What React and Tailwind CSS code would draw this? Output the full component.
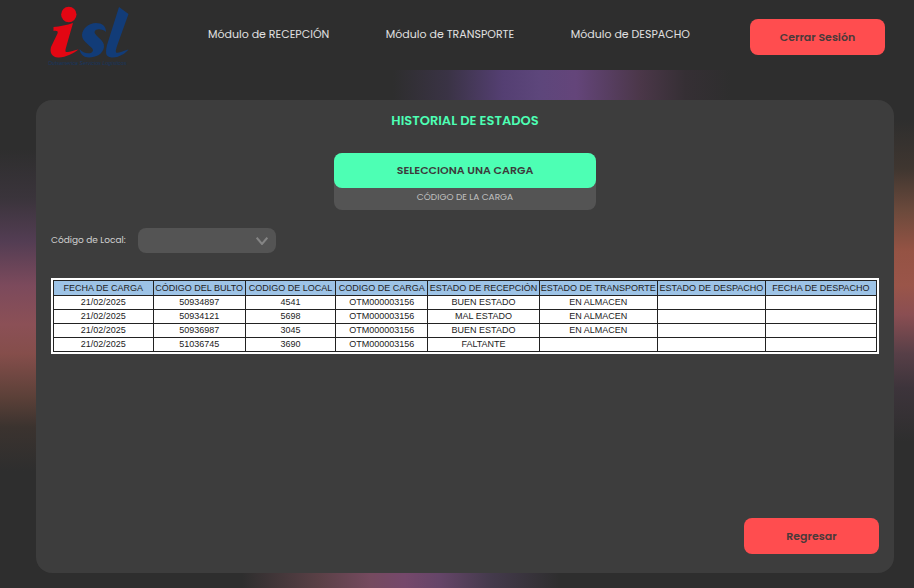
const columns = [
  { title: "FECHA DE CARGA", width: "w-[12.1%]" },
  { title: "CÓDIGO DEL BULTO", width: "w-[11.2%]" },
  { title: "CODIGO DE LOCAL", width: "w-[11%]" },
  { title: "CODIGO DE CARGA", width: "w-[11.2%]" },
  { title: "ESTADO DE RECEPCIÓN", width: "w-[13.5%]" },
  { title: "ESTADO DE TRANSPORTE", width: "w-[14.4%]" },
  { title: "ESTADO DE DESPACHO", width: "w-[13.1%]" },
  { title: "FECHA DE DESPACHO", width: "w-[13.5%]" },
];

const rows = [
  ["21/02/2025", "50934897", "4541", "OTM000003156", "BUEN ESTADO", "EN ALMACEN", "", ""],
  ["21/02/2025", "50934121", "5698", "OTM000003156", "MAL ESTADO", "EN ALMACEN", "", ""],
  ["21/02/2025", "50936987", "3045", "OTM000003156", "BUEN ESTADO", "EN ALMACEN", "", ""],
  ["21/02/2025", "51036745", "3690", "OTM000003156", "FALTANTE", "", "", ""],
];

function Logo() {
  return (
    <svg viewBox="0 0 84 62" className="h-[62px] w-[84px]" role="img" aria-label="isl">
      <g fill="#e30613">
        <circle cx="20.8" cy="8.500" r="7.700" />
        <path d="M5.500 21C12 20.500 19 19 25 17L19 38C17 45 16.500 46.500 20 46C24 45.500 27 44 30.500 43.500C26 47 17 52 10 51.500C4 51 1.500 47 3 41L9.500 27.500C10.500 25 8.500 24.500 5.500 25Z" />
      </g>
      <g fill="#123c78">
        <path d="M58 26C55 23 47.500 22 46.500 26C46.500 30 57 34 56 41C55 48 48 51.500 41 51.500C36 51.500 32 48 31.500 43C35 48 44 49 45 44.500C45.500 41 33.500 36 34 29C34.500 22 41 17 48 17C54 17 58 20 58 26Z" />
        <path d="M71 1L80.500 8L69 40C67 46.500 67.500 47.500 71 46.500C75 46 78 43.500 80.500 43.500C77 48 70 52 63.500 51.500C57 51 57.500 46 59 39Z" />
      </g>
      <text x="0" y="59" fill="#173763" fontSize="5.3" fontStyle="italic" fontFamily="Liberation Sans, sans-serif">
        Outsamerica Servicios Logísticos
      </text>
    </svg>
  );
}

function RedButton({ children }) {
  return (
    <button
      type="button"
      className="h-9 w-[135px] shrink-0 rounded-lg bg-[#ff4d4f] text-[11px] font-semibold text-[#4a3a3a]"
    >
      {children}
    </button>
  );
}

export default function App() {
  return (
    <div className="flex min-h-screen flex-col bg-[#2e2e2e] bg-[linear-gradient(90deg,#2e2e2e_43%,#3a3345_49%,#543f72_55%,#5d467b_59%,#64457a_63%,#4b3749_70%,#352f34_75%,#2e2e2e_80%)] font-[Poppins,Inter,sans-serif]">
      <header className="flex h-[70px] shrink-0 items-center bg-[#2e2e2e] pr-[29px] pl-12">
        <div className="pt-1">
          <Logo />
        </div>
        <nav className="flex flex-1 justify-between pr-[60px] pb-0.5 pl-[76px] text-[11px] text-[#e0e0e0]">
          <a href="#recepcion">Módulo de RECEPCIÓN</a>
          <a href="#transporte">Módulo de TRANSPORTE</a>
          <a href="#despacho">Módulo de DESPACHO</a>
        </nav>
        <div className="pt-1">
          <RedButton>Cerrar Sesión</RedButton>
        </div>
      </header>

      <div className="h-[30px] shrink-0" />

      <div className="flex flex-1">
        <div className="w-9 shrink-0 bg-[linear-gradient(180deg,#2e2e2e_10%,#3a343b_20%,#533d53_29%,#7c4a5c_38%,#8b5056_46%,#854e4b_52%,#5b4038_61%,#3b332f_67%,#2e2e2e_76%)]" />
        <div className="flex min-w-0 flex-1 flex-col bg-[linear-gradient(90deg,#2e2e2e_24%,#5a4046_33%,#754a5f_39%,#75486b_43%,#654568_47%,#443a4c_53%,#2e2e2e_61%)] bg-[length:100%_60px] bg-bottom bg-no-repeat">
          <main className="flex flex-1 flex-col rounded-2xl bg-[#3d3d3d] px-[15px] pt-[13px] pb-[19px]">
            <h1 className="text-center text-[13px] leading-4 font-semibold text-[#4dffb4]">HISTORIAL DE ESTADOS</h1>

            <div className="mt-6 w-[262px] self-center rounded-lg bg-[#545454]">
              <button type="button" className="h-[35px] w-full rounded-lg bg-[#4dffb4] text-[11px] font-semibold text-[#3c3c3c]">
                SELECCIONA UNA CARGA
              </button>
              <p className="pt-0.5 pb-1.5 text-center text-[9px] leading-[14px] text-[#c0c0c0]">CÓDIGO DE LA CARGA</p>
            </div>

            <div className="mt-[18px] flex items-center gap-3">
              <label htmlFor="local" className="text-[9px] text-[#d0d0d0]">
                Código de Local:
              </label>
              <div className="grid items-center">
                <select
                  id="local"
                  className="col-start-1 row-start-1 h-[25px] w-[138px] appearance-none rounded-lg bg-[#545454] px-3 text-[9px] text-[#d0d0d0]"
                />
                <svg
                  viewBox="0 0 12 8"
                  className="pointer-events-none col-start-1 row-start-1 mr-2 h-2 w-3 justify-self-end"
                  fill="none"
                  stroke="#858585"
                  strokeWidth="2"
                  aria-hidden="true"
                >
                  <path d="M.7 .7L6 7L11.300 .7" />
                </svg>
              </div>
            </div>

            <div className="mt-[25px] bg-white p-0.5">
              <table className="w-full table-fixed border-collapse font-['Liberation_Sans',Arial,sans-serif] text-[9px] leading-[13px] text-[#222]">
                <thead>
                  <tr className="h-[15px] bg-[#9dc3e6]">
                    {columns.map((column) => (
                      <th
                        key={column.title}
                        scope="col"
                        className={`border border-[#222] p-0 text-center font-normal whitespace-nowrap ${column.width}`}
                      >
                        {column.title}
                      </th>
                    ))}
                  </tr>
                </thead>
                <tbody>
                  {rows.map((row) => (
                    <tr key={row[1]} className="h-[14px]">
                      {row.map((value, index) => (
                        <td key={columns[index].title} className="border border-[#222] p-0 text-center">
                          {value}
                        </td>
                      ))}
                    </tr>
                  ))}
                </tbody>
              </table>
            </div>

            <div className="mt-auto flex justify-end">
              <RedButton>Regresar</RedButton>
            </div>
          </main>
          <div className="h-[15px] shrink-0" />
        </div>
        <div className="w-5 shrink-0 bg-[linear-gradient(180deg,#2e2e2e_4%,#3f3630_14%,#6d4a3c_23%,#955344_31%,#9a5549_38%,#8a4e52_44%,#573f47_52%,#3d343b_59%,#2e2e2e_70%)]" />
      </div>
    </div>
  );
}
